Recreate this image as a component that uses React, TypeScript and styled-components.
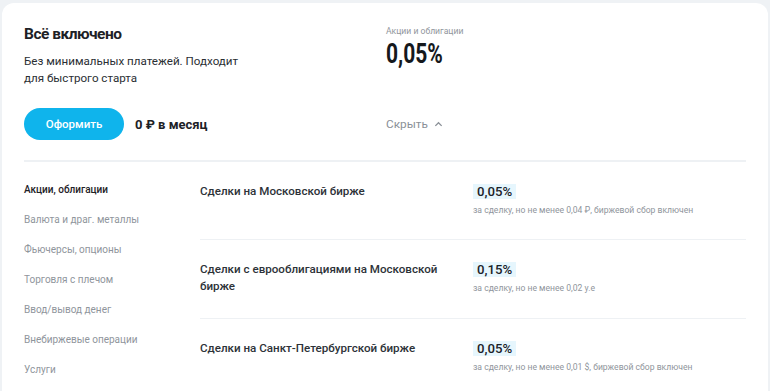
import React from 'react';
import styled, { createGlobalStyle } from 'styled-components';

const GlobalStyle = createGlobalStyle`
  * {
    box-sizing: border-box;
  }

  body {
    margin: 0;
    background: #eff2f5;
    font-family: Roboto, 'Noto Sans', 'Liberation Sans', sans-serif;
    color: #1d2126;
  }
`;

const Page = styled.div`
  padding: 3px 2px 0;
  height: 391px;
  overflow: hidden;
`;

const Card = styled.section`
  background: #ffffff;
  border-radius: 12px 12px 0 0;
  padding: 20px 22px 0;
  min-height: 400px;
`;

const Top = styled.div`
  display: grid;
  grid-template-columns: 362px 1fr;
  grid-template-rows: auto auto;
  row-gap: 21px;
  padding-bottom: 20px;
  border-bottom: 2px solid #eef1f4;
`;

const Title = styled.h2`
  margin: 0;
  font-size: 15.5px;
  line-height: 22px;
  font-weight: 700;
  letter-spacing: -0.5px;
`;

const Description = styled.p`
  margin: 8px 0 0;
  width: 230px;
  font-size: 11.6px;
  line-height: 17px;
  color: #2a2e33;
`;

const RateLabel = styled.div`
  margin-top: 2px;
  font-size: 8.6px;
  line-height: 13px;
  color: #8f959c;
`;

const RateValue = styled.div`
  display: inline-block;
  font-size: 28px;
  line-height: 32px;
  font-weight: 700;
  color: #15181c;
  transform: scaleX(0.75);
  transform-origin: left center;
`;

const Actions = styled.div`
  display: flex;
  align-items: center;
  gap: 11px;
`;

const Button = styled.button`
  width: 100px;
  height: 32px;
  border: none;
  border-radius: 16px;
  background: #0fb4ec;
  color: #ffffff;
  font-family: inherit;
  font-size: 11.5px;
  font-weight: 500;
  cursor: pointer;
`;

const Price = styled.span`
  font-size: 13px;
  font-weight: 700;
  color: #1d2126;
`;

const Toggle = styled.button`
  display: flex;
  align-items: center;
  gap: 6px;
  align-self: center;
  justify-self: start;
  padding: 0;
  border: none;
  background: none;
  font-family: inherit;
  font-size: 11.8px;
  color: #8a9097;
  cursor: pointer;

  svg {
    width: 9px;
    height: 9px;
  }
`;

const Details = styled.div`
  display: grid;
  grid-template-columns: 176px 1fr;
`;

const Menu = styled.ul`
  list-style: none;
  margin: 0;
  padding: 21px 0 0;
  display: flex;
  flex-direction: column;
  gap: 16px;
`;

const MenuItem = styled.li<{ $active?: boolean }>`
  font-size: 10px;
  line-height: 14px;
  color: ${({ $active }) => ($active ? '#1d2126' : '#8f959c')};
  font-weight: ${({ $active }) => ($active ? 500 : 400)};
`;

const Rows = styled.div`
  display: flex;
  flex-direction: column;
`;

const Row = styled.div`
  display: grid;
  grid-template-columns: 273px 1fr;
  align-items: start;
  padding: 22px 0 23px;
  border-bottom: 1px solid #eef1f4;

  &:last-child {
    border-bottom: none;
  }
`;

const RowTitle = styled.div`
  max-width: 245px;
  margin-top: -1px;
  font-size: 11.6px;
  line-height: 17px;
  font-weight: 500;
  color: #2d3238;
`;

const Fee = styled.div`
  display: flex;
  flex-direction: column;
  align-items: flex-start;
`;

const Badge = styled.span`
  padding: 0 4px;
  background: #e6f6fd;
  font-size: 13.2px;
  line-height: 15px;
  font-weight: 500;
  color: #1b2229;
`;

const Note = styled.div`
  margin-top: 5px;
  font-size: 8.6px;
  line-height: 12px;
  color: #8f959c;
`;

const menu = [
  'Акции, облигации',
  'Валюта и драг. металлы',
  'Фьючерсы, опционы',
  'Торговля с плечом',
  'Ввод/вывод денег',
  'Внебиржевые операции',
  'Услуги',
];

const deals = [
  {
    title: 'Сделки на Московской бирже',
    rate: '0,05%',
    note: 'за сделку, но не менее 0,04 ₽, биржевой сбор включен',
  },
  {
    title: 'Сделки с еврооблигациями на Московской бирже',
    rate: '0,15%',
    note: 'за сделку, но не менее 0,02 у.е',
  },
  {
    title: 'Сделки на Санкт-Петербургской бирже',
    rate: '0,05%',
    note: 'за сделку, но не менее 0,01 $, биржевой сбор включен',
  },
];

export default function App() {
  return (
    <>
      <GlobalStyle />
      <Page>
        <Card>
          <Top>
            <div>
              <Title>Всё включено</Title>
              <Description>Без минимальных платежей. Подходит для быстрого старта</Description>
            </div>
            <div>
              <RateLabel>Акции и облигации</RateLabel>
              <RateValue>0,05%</RateValue>
            </div>
            <Actions>
              <Button>Оформить</Button>
              <Price>0 ₽ в месяц</Price>
            </Actions>
            <Toggle>
              Скрыть
              <svg viewBox="0 0 10 10" fill="none" stroke="currentColor" strokeWidth="1.4">
                <path d="M1.5 6.5 5 3l3.5 3.5" />
              </svg>
            </Toggle>
          </Top>

          <Details>
            <Menu>
              {menu.map((item, i) => (
                <MenuItem key={item} $active={i === 0}>
                  {item}
                </MenuItem>
              ))}
            </Menu>
            <Rows>
              {deals.map((deal) => (
                <Row key={deal.title}>
                  <RowTitle>{deal.title}</RowTitle>
                  <Fee>
                    <Badge>{deal.rate}</Badge>
                    <Note>{deal.note}</Note>
                  </Fee>
                </Row>
              ))}
            </Rows>
          </Details>
        </Card>
      </Page>
    </>
  );
}
